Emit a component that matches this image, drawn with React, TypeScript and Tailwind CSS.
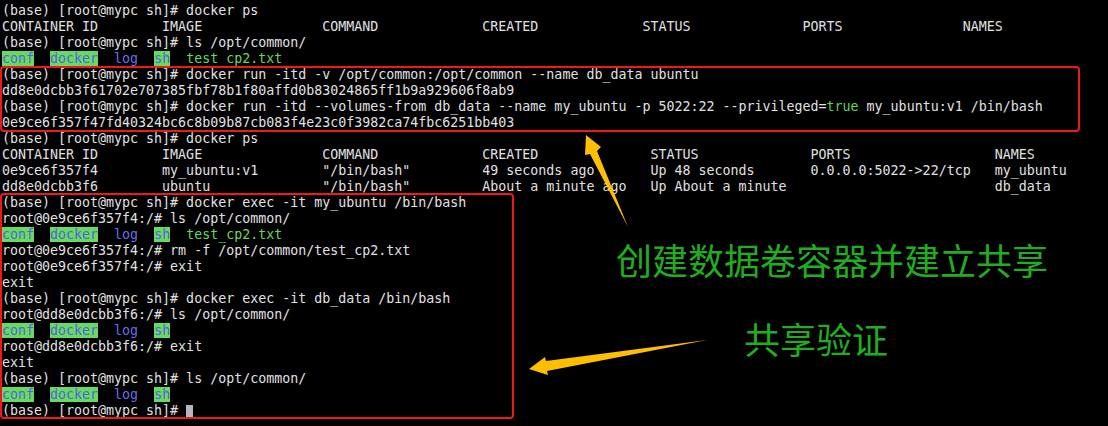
import React from "react";

type Seg = { t: string; c?: "dir" | "log" | "file" | "kw" };

const prompt = "(base) [root@mypc sh]# ";
const c1 = "root@0e9ce6f357f4:/# ";
const c2 = "root@dd8e0dcbb3f6:/# ";

const row = (cols: string[], widths: number[]) =>
  cols.map((col, i) => (i < widths.length ? col.padEnd(widths[i], " ") : col)).join("");

const lsFull: Seg[] = [
  { t: "conf", c: "dir" },
  { t: "  " },
  { t: "docker", c: "dir" },
  { t: "  " },
  { t: "log", c: "log" },
  { t: "  " },
  { t: "sh", c: "dir" },
  { t: "  " },
  { t: "test_cp2.txt", c: "file" },
];

const lsShort: Seg[] = lsFull.slice(0, 7);

const w1 = [20, 20, 20, 20, 20, 20];
const w2 = [20, 20, 20, 21, 20, 23];

const lines: Seg[][] = [
  [{ t: prompt + "docker ps" }],
  [{ t: row(["CONTAINER ID", "IMAGE", "COMMAND", "CREATED", "STATUS", "PORTS", "NAMES"], w1) }],
  [{ t: prompt + "ls /opt/common/" }],
  lsFull,
  [{ t: prompt + "docker run -itd -v /opt/common:/opt/common --name db_data ubuntu" }],
  [{ t: "dd8e0dcbb3f61702e707385fbf78b1f80affd0b83024865ff1b9a929606f8ab9" }],
  [
    { t: prompt + "docker run -itd --volumes-from db_data --name my_ubuntu -p 5022:22 --privileged=" },
    { t: "true", c: "kw" },
    { t: " my_ubuntu:v1 /bin/bash" },
  ],
  [{ t: "0e9ce6f357f47fd40324bc6c8b09b87cb083f4e23c0f3982ca74fbc6251bb403" }],
  [{ t: prompt + "docker ps" }],
  [{ t: row(["CONTAINER ID", "IMAGE", "COMMAND", "CREATED", "STATUS", "PORTS", "NAMES"], w2) }],
  [{ t: row(["0e9ce6f357f4", "my_ubuntu:v1", '"/bin/bash"', "49 seconds ago", "Up 48 seconds", "0.0.0.0:5022->22/tcp", "my_ubuntu"], w2) }],
  [{ t: row(["dd8e0dcbb3f6", "ubuntu", '"/bin/bash"', "About a minute ago", "Up About a minute", "", "db_data"], w2) }],
  [{ t: prompt + "docker exec -it my_ubuntu /bin/bash" }],
  [{ t: c1 + "ls /opt/common/" }],
  lsFull,
  [{ t: c1 + "rm -f /opt/common/test_cp2.txt" }],
  [{ t: c1 + "exit" }],
  [{ t: "exit" }],
  [{ t: prompt + "docker exec -it db_data /bin/bash" }],
  [{ t: c2 + "ls /opt/common/" }],
  lsShort,
  [{ t: c2 + "exit" }],
  [{ t: "exit" }],
  [{ t: prompt + "ls /opt/common/" }],
  lsShort,
];

const segClass = (c?: Seg["c"]) => {
  if (c === "dir") return "bg-[#66dc58] text-[#5b5bf4]";
  if (c === "log") return "text-[#6c6cec]";
  if (c === "file") return "text-[#66d95c]";
  if (c === "kw") return "text-[#5cd35c]";
  return "";
};

const App: React.FC = () => {
  return (
    <div className="relative w-[1108px] h-[426px] overflow-hidden bg-black">
      <div className="pl-[2px] pt-[3px] font-['DejaVu_Sans_Mono',monospace] text-[13.3px] leading-[16px] text-[#e0e0e0] whitespace-pre">
        {lines.map((segs, i) => (
          <div key={i} className="h-[16px]">
            {segs.map((s, j) => (
              <span key={j} className={segClass(s.c)}>
                {s.t}
              </span>
            ))}
          </div>
        ))}
        <div className="h-[16px] flex items-center">
          <span>{prompt}</span>
          <span className="inline-block w-[7px] h-[13px] bg-[#b6b6be]" />
        </div>
      </div>

      {/* red highlight boxes */}
      <div className="absolute left-0 top-[66px] w-[1080px] h-[66px] border-2 border-[#f01818] rounded-[4px]" />
      <div className="absolute left-0 top-[193px] w-[514px] h-[226px] border-2 border-[#f01818] rounded-[4px]" />

      {/* arrows */}
      <svg className="absolute inset-0" width="1108" height="426" viewBox="0 0 1108 426">
        <polygon
          fill="#ffbf00"
          points="628,227 597,151 601,147 586,135 585,155 590,154"
        />
        <polygon
          fill="#ffbf00"
          points="707,340 546,361 545,357 529,369 548,375 547,371"
        />
      </svg>

      {/* annotations */}
      <div className="absolute left-[616px] top-[241px] font-['Noto_Sans_CJK_SC',sans-serif] text-[36px] leading-[36px] text-[#20ae20] whitespace-nowrap">
        创建数据卷容器并建立共享
      </div>
      <div className="absolute left-[744px] top-[320px] font-['Noto_Sans_CJK_SC',sans-serif] text-[36px] leading-[36px] text-[#20ae20] whitespace-nowrap">
        共享验证
      </div>
    </div>
  );
};

export default App;
